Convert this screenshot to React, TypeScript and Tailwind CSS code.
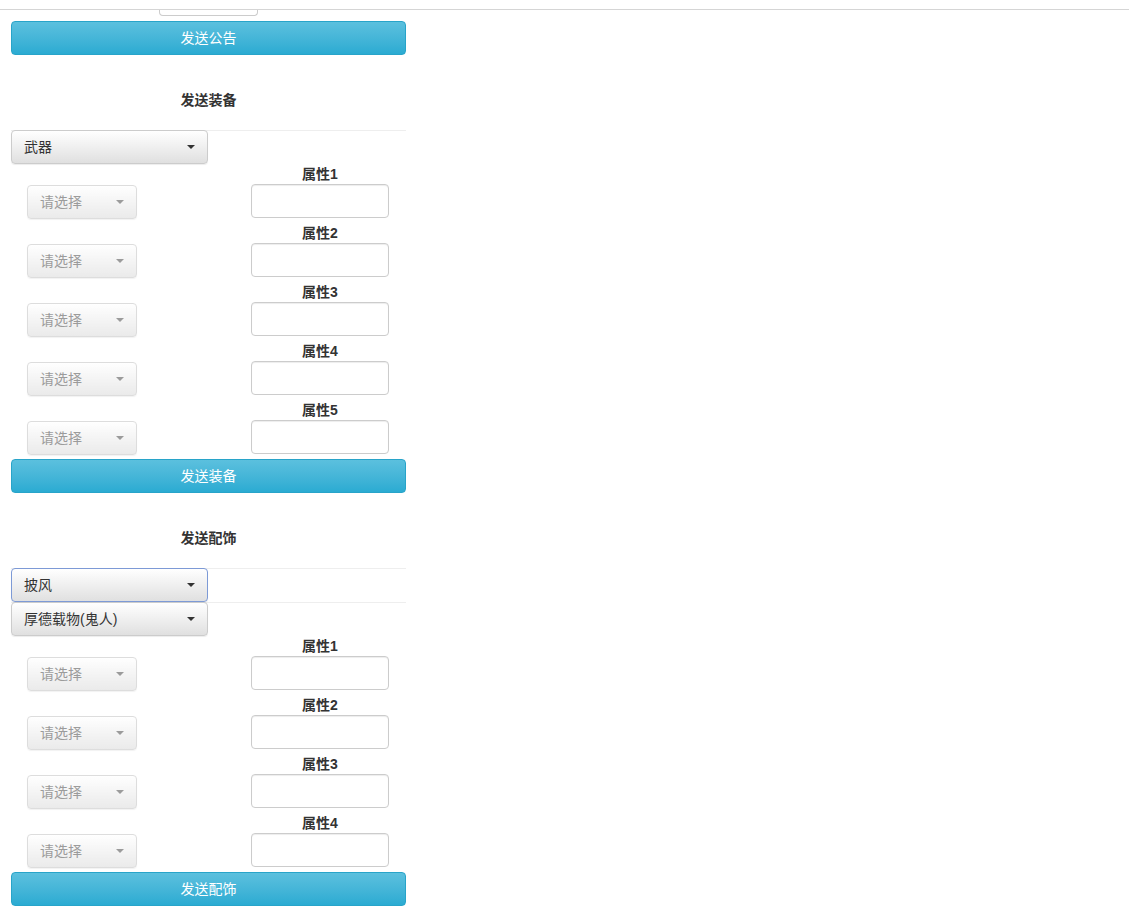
import React from "react";

const FONT = { fontFamily: '"Liberation Sans", "Noto Sans CJK SC", sans-serif' };

function Caret({ color = "border-t-[#333]" }: { color?: string }) {
  return (
    <span className={`absolute right-[12px] top-1/2 -mt-[2px] h-0 w-0 border-x-[4px] border-t-[4px] border-x-transparent ${color}`} />
  );
}

function SelectBtn({ label, focused }: { label: string; focused?: boolean }) {
  return (
    <div
      className={`relative flex h-[34px] w-[197px] items-center rounded-[4px] border bg-gradient-to-b from-white to-[#e0e0e0] pl-[12px] text-[14px] text-[#333] shadow-[inset_0_1px_0_rgba(255,255,255,0.15),0_1px_1px_rgba(0,0,0,0.075)] ${
        focused ? "border-[#7d9ad6]" : "border-[#ccc]"
      }`}
    >
      <span>{label}</span>
      <Caret />
    </div>
  );
}

function DisabledSelect() {
  return (
    <div className="relative flex h-[34px] w-[110px] items-center rounded-[4px] border border-[#ccc] bg-gradient-to-b from-white to-[#e0e0e0] pl-[12px] text-[14px] text-[#666] opacity-65 shadow-[inset_0_1px_0_rgba(255,255,255,0.15),0_1px_1px_rgba(0,0,0,0.075)]">
      <span>请选择</span>
      <Caret color="border-t-[#666]" />
    </div>
  );
}

function AttrRow({ n }: { n: number }) {
  return (
    <div className="flex h-[59px]">
      <div className="ml-[16px] mt-[21px]">
        <DisabledSelect />
      </div>
      <div className="ml-[114px] flex w-[138px] flex-col">
        <div className="h-[20px] text-center text-[14px] font-bold leading-[20px] text-[#333]">属性{n}</div>
        <div className="h-[34px] w-[138px] rounded-[4px] border border-[#ccc] bg-white shadow-[inset_0_1px_1px_rgba(0,0,0,0.075)]" />
      </div>
    </div>
  );
}

function InfoButton({ label }: { label: string }) {
  return (
    <div className="flex h-[34px] w-full items-center justify-center rounded-[4px] border border-[#28a4c9] bg-gradient-to-b from-[#5bc0de] to-[#2aabd2] text-[14px] text-white">
      {label}
    </div>
  );
}

function Heading({ label }: { label: string }) {
  return (
    <div className="mb-[20px] mt-[35px] h-[20px] text-center text-[14px] font-bold leading-[20px] text-[#333]">
      {label}
    </div>
  );
}

export default function App() {
  return (
    <div className="min-h-[912px] w-[1129px] bg-white" style={FONT}>
      <div className="h-[10px] border-b border-[#d5d5d5]" />
      <div className="ml-[159px] h-[6px] w-[99px] rounded-b-[4px] border border-t-0 border-[#ccc]" />
      <div className="ml-[11px] w-[395px]">
        <div className="mt-[5px]">
          <InfoButton label="发送公告" />
        </div>

        <Heading label="发送装备" />
        <div className="border-t border-[#eee]">
          <div className="relative -mt-px">
            <SelectBtn label="武器" />
          </div>
        </div>
        {[1, 2, 3, 4, 5].map((n) => (
          <AttrRow key={n} n={n} />
        ))}
        <InfoButton label="发送装备" />

        <Heading label="发送配饰" />
        <div className="border-y border-[#eee]">
          <div className="relative -mt-px">
            <SelectBtn label="披风" focused />
          </div>
        </div>
        <div className="relative -mt-px">
          <SelectBtn label="厚德载物(鬼人)" />
        </div>
        {[1, 2, 3, 4].map((n) => (
          <AttrRow key={n} n={n} />
        ))}
        <InfoButton label="发送配饰" />
      </div>
    </div>
  );
}
